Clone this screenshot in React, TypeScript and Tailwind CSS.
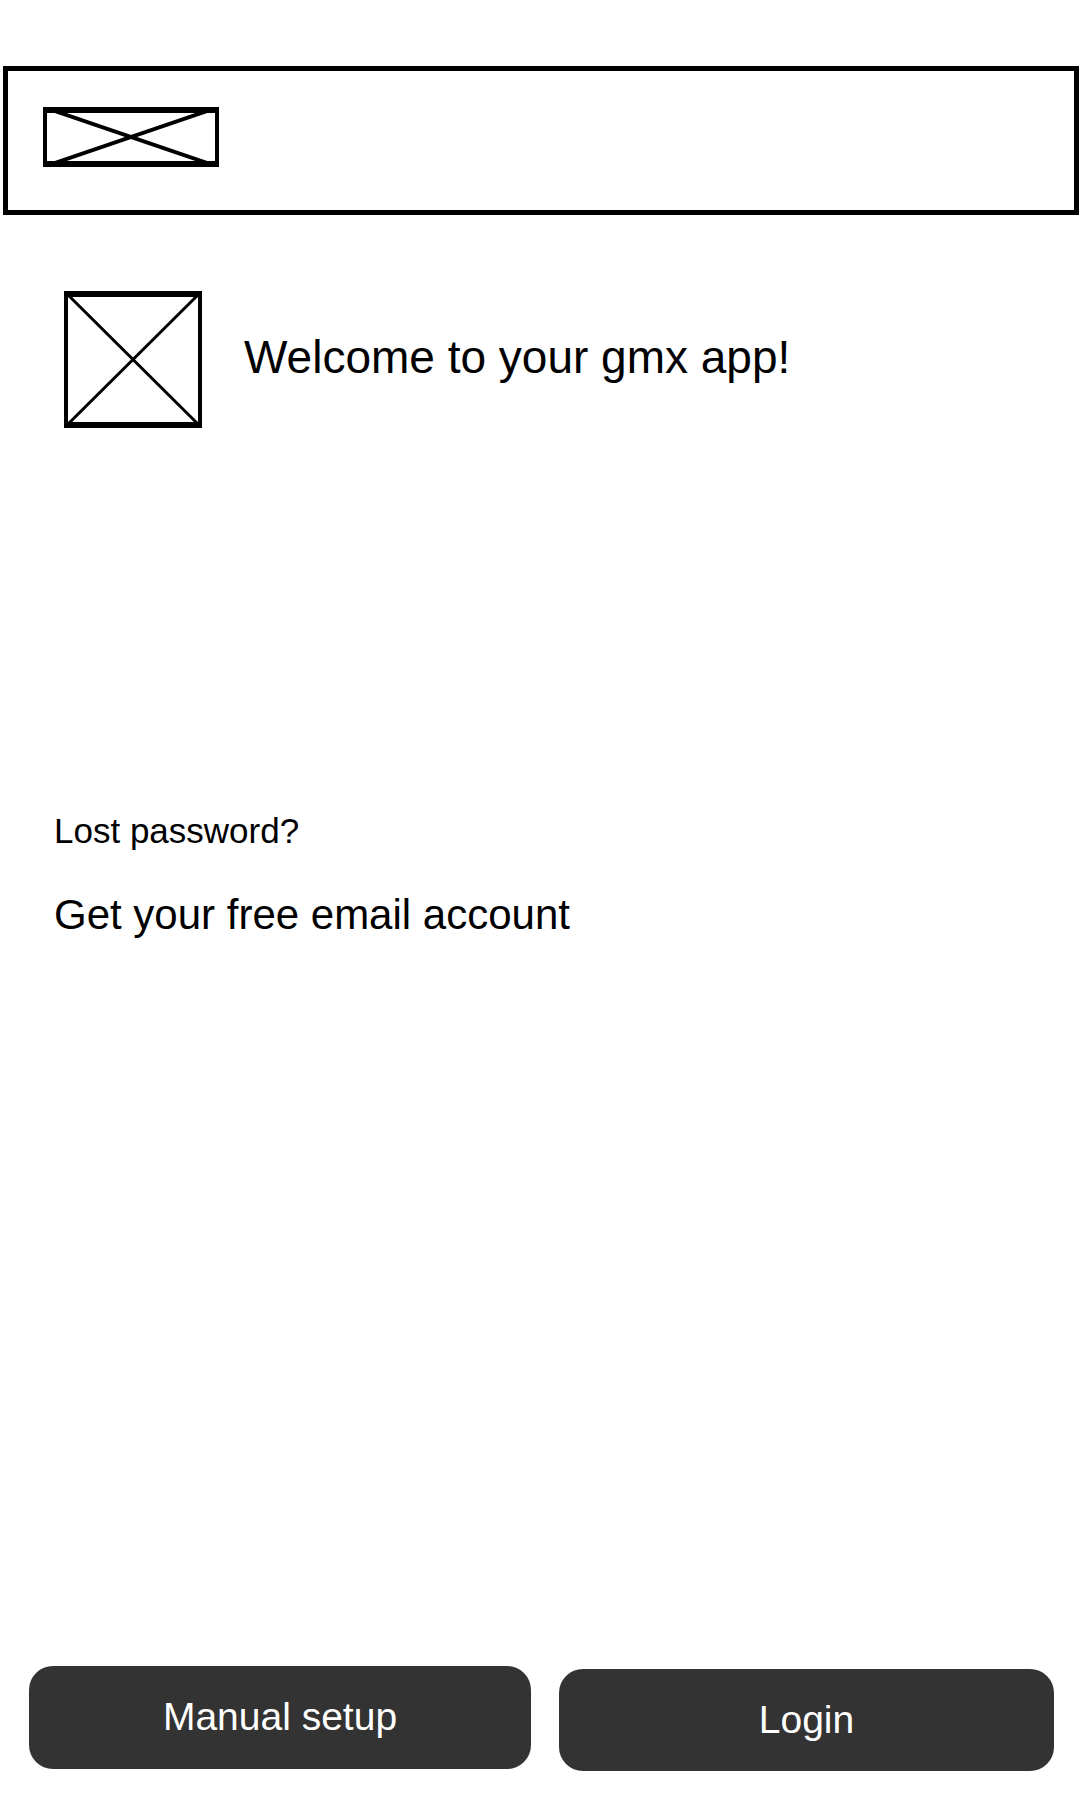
import React from 'react'

const CrossBox = ({ w, h, side, edge, diag }: { w: number; h: number; side: number; edge: number; diag: number }) => (
    <svg width={w} height={h} viewBox={`0 0 ${w} ${h}`} className="block shrink-0">
        <line x1={0} y1={0} x2={w} y2={h} stroke="black" strokeWidth={diag} />
        <line x1={w} y1={0} x2={0} y2={h} stroke="black" strokeWidth={diag} />
        <rect x={0} y={0} width={w} height={edge} fill="black" />
        <rect x={0} y={h - edge} width={w} height={edge} fill="black" />
        <rect x={0} y={0} width={side} height={h} fill="black" />
        <rect x={w - side} y={0} width={side} height={h} fill="black" />
    </svg>
)

const App = () => {
    return (
        <div className="flex flex-col h-[1800px] bg-white text-black font-['Liberation_Sans',Arial,sans-serif]">
            {/* Top bar */}
            <div className="mt-[66px] ml-[3px] mr-px h-[149px] border-[5px] border-black pl-[35px] pt-[36px]">
                <CrossBox w={176} h={60} side={4} edge={6} diag={4} />
            </div>

            {/* Welcome */}
            <div className="flex items-center mt-[76px] pl-[64px] gap-[42px]">
                <CrossBox w={138} h={137} side={4} edge={6} diag={3} />
                <h1 className="text-[46px] leading-none pb-[6px]">Welcome to your gmx app!</h1>
            </div>

            {/* Links */}
            <div className="pl-[54px] mt-[383px]">
                <p className="text-[35px] leading-[40px]">Lost password?</p>
                <p className="text-[42px] leading-[48px] mt-[40px]">Get your free email account</p>
            </div>

            {/* Actions */}
            <div className="mt-auto flex items-start pl-[29px] pr-[26px] pb-[29px] gap-[28px]">
                <button className="w-[502px] h-[103px] rounded-[24px] bg-[#333333] text-white text-[39px]">
                    Manual setup
                </button>
                <button className="w-[495px] h-[102px] mt-[3px] rounded-[24px] bg-[#333333] text-white text-[39px]">
                    Login
                </button>
            </div>
        </div>
    )
}

export default App
